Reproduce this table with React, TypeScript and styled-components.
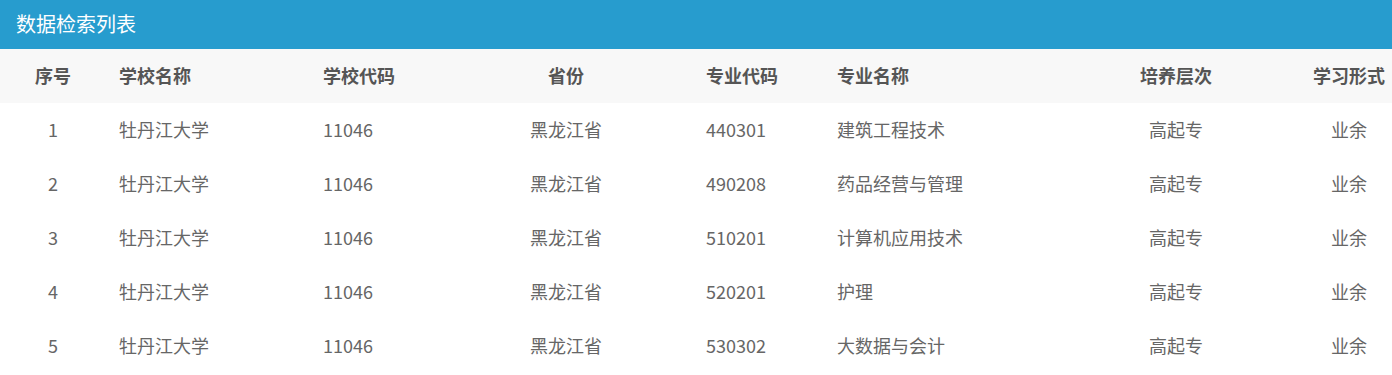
import React from 'react';
import styled, { createGlobalStyle } from 'styled-components';

const GlobalStyle = createGlobalStyle`
  body {
    margin: 0;
    background: #fff;
    font-family: "Noto Sans CJK SC", "Noto Sans", sans-serif;
  }
`;

// column widths and alignment, left to right
const COLUMNS: { width: number; align: 'left' | 'center' }[] = [
  { width: 106, align: 'center' },
  { width: 204, align: 'left' },
  { width: 129, align: 'left' },
  { width: 254, align: 'center' },
  { width: 131, align: 'left' },
  { width: 222, align: 'left' },
  { width: 260, align: 'center' },
  { width: 86, align: 'center' },
];

const HEADERS = ['序号', '学校名称', '学校代码', '省份', '专业代码', '专业名称', '培养层次', '学习形式'];

const ROWS = [
  ['1', '牡丹江大学', '11046', '黑龙江省', '440301', '建筑工程技术', '高起专', '业余'],
  ['2', '牡丹江大学', '11046', '黑龙江省', '490208', '药品经营与管理', '高起专', '业余'],
  ['3', '牡丹江大学', '11046', '黑龙江省', '510201', '计算机应用技术', '高起专', '业余'],
  ['4', '牡丹江大学', '11046', '黑龙江省', '520201', '护理', '高起专', '业余'],
  ['5', '牡丹江大学', '11046', '黑龙江省', '530302', '大数据与会计', '高起专', '业余'],
];

const Panel = styled.section`
  width: 100%;
`;

// blue title bar
const TitleBar = styled.header`
  box-sizing: border-box;
  height: 49px;
  padding: 0 0 2px 16px;
  background: #279cce;
  color: #fff;
  font-size: 20px;
  display: flex;
  align-items: center;
`;

const Row = styled.div<{ $head?: boolean }>`
  box-sizing: border-box;
  display: grid;
  grid-template-columns: ${COLUMNS.map((c) => `${c.width}px`).join(' ')};
  height: 54px;
  padding-bottom: 2px;
  align-items: center;
  background: ${({ $head }) => ($head ? '#f8f8f8' : '#fff')};
  color: ${({ $head }) => ($head ? '#555' : '#666')};
  font-weight: ${({ $head }) => ($head ? 700 : 400)};
  font-size: 18px;
`;

const Cell = styled.div<{ $align: 'left' | 'center' }>`
  text-align: ${({ $align }) => $align};
  padding-left: ${({ $align }) => ($align === 'left' ? '13px' : '0')};
  white-space: nowrap;
`;

export default function App() {
  return (
    <>
      <GlobalStyle />
      <Panel>
        <TitleBar>数据检索列表</TitleBar>
        <Row $head>
          {HEADERS.map((h, i) => (
            <Cell key={h} $align={COLUMNS[i].align}>
              {h}
            </Cell>
          ))}
        </Row>
        {ROWS.map((row) => (
          <Row key={row[0]}>
            {row.map((v, i) => (
              <Cell key={i} $align={COLUMNS[i].align}>
                {v}
              </Cell>
            ))}
          </Row>
        ))}
      </Panel>
    </>
  );
}
